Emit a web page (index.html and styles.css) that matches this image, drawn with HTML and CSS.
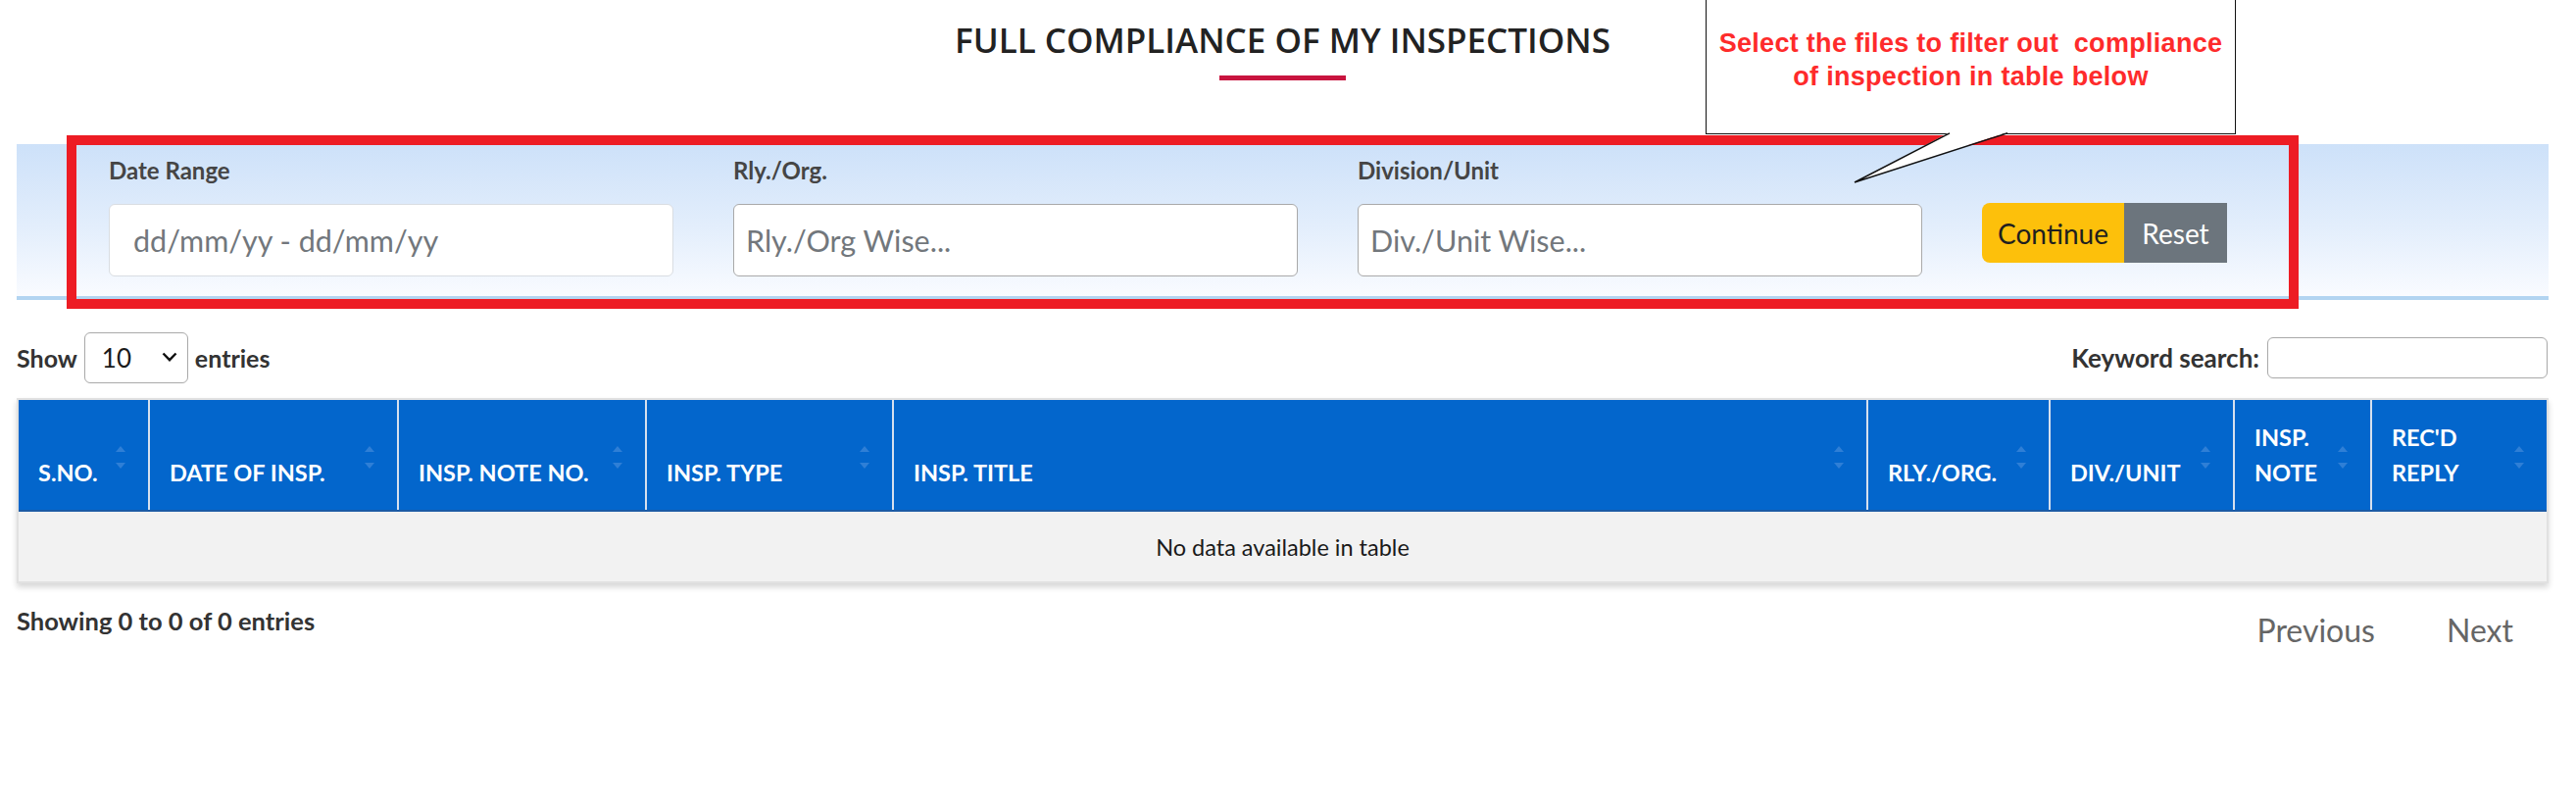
FILE: index.html
```html
<!DOCTYPE html>
<html lang="en">
<head>
<meta charset="utf-8">
<title>Full Compliance of My Inspections</title>
<link rel="stylesheet" href="styles.css">
</head>
<body>
<div class="page">
  <header class="page-head">
    <h1 class="title">FULL COMPLIANCE OF MY INSPECTIONS</h1>
    <div class="title-rule"></div>
  </header>

  <section class="filters">
    <div class="field">
      <label class="field-label">Date Range</label>
      <input class="input input-date" type="text" placeholder="dd/mm/yy - dd/mm/yy">
    </div>
    <div class="field">
      <label class="field-label">Rly./Org.</label>
      <input class="input input-dark" type="text" placeholder="Rly./Org Wise...">
    </div>
    <div class="field">
      <label class="field-label">Division/Unit</label>
      <input class="input input-dark" type="text" placeholder="Div./Unit Wise...">
    </div>
    <div class="actions">
      <button class="btn btn-continue" type="button">Continue</button><button class="btn btn-reset" type="button">Reset</button>
    </div>
  </section>

  <div class="dt-top">
    <div class="dt-length">
      <span>Show</span>
      <span class="select-wrap">
        <select class="dt-select"><option>10</option><option>25</option><option>50</option><option>100</option></select>
        <svg class="chev" viewBox="0 0 16 10" width="16" height="10"><path d="M1.5 1.5 L8 8.2 L14.5 1.5" fill="none" stroke="#111" stroke-width="2.4"/></svg>
      </span>
      <span>entries</span>
    </div>
    <div class="dt-search">
      <span>Keyword search:</span>
      <input class="search-input" type="search">
    </div>
  </div>

  <div class="table-wrap">
    <table class="dt">
      <colgroup>
        <col class="w1"><col class="w2"><col class="w3"><col class="w4"><col class="w5"><col class="w6"><col class="w7"><col class="w8"><col class="w9">
      </colgroup>
      <thead>
        <tr>
          <th>S.NO.</th>
          <th>DATE OF INSP.</th>
          <th>INSP. NOTE NO.</th>
          <th>INSP. TYPE</th>
          <th>INSP. TITLE</th>
          <th>RLY./ORG.</th>
          <th>DIV./UNIT</th>
          <th>INSP.<br>NOTE</th>
          <th>REC'D<br>REPLY</th>
        </tr>
      </thead>
      <tbody>
        <tr><td class="empty" colspan="9">No data available in table</td></tr>
      </tbody>
    </table>
  </div>

  <div class="dt-bottom">
    <div class="dt-info">Showing 0 to 0 of 0 entries</div>
    <div class="dt-paginate">
      <span class="pg-btn">Previous</span>
      <span class="pg-btn">Next</span>
    </div>
  </div>
</div>

<div class="annot-frame"></div>
<div class="callout">
  <p class="callout-text">Select the files to filter out&nbsp; compliance<br>of inspection in table below</p>
</div>
<svg class="callout-tail" viewBox="0 0 170 56" width="170" height="56">
  <polygon points="99,0 2,51 158,0" fill="#ffffff"/>
  <polyline points="99,0.8 2,51 158,0.8" fill="none" stroke="#111" stroke-width="1.5"/>
</svg>
</body>
</html>
```

FILE: styles.css
```css
* { box-sizing: border-box; }

html, body {
  margin: 0;
  padding: 0;
  background: #ffffff;
}

body {
  font-family: Lato, "Open Sans", "Liberation Sans", sans-serif;
  color: #212529;
  width: 2628px;
  height: 814px;
  overflow: hidden;
  position: relative;
}

.page {
  padding: 0 28px 0 17px;
}

/* ---------- heading ---------- */
.page-head {
  display: flex;
  flex-direction: column;
  align-items: center;
  padding-top: 17px;
}

.title {
  margin: 0;
  font-family: "Open Sans", "Liberation Sans", sans-serif;
  font-weight: 600;
  font-size: 35px;
  line-height: 47px;
  color: #222222;
  letter-spacing: 0;
}

.title-rule {
  width: 129px;
  height: 5px;
  margin-top: 13px;
  background: #c8143f;
}

/* ---------- filter band ---------- */
.filters {
  margin-top: 65px;
  display: flex;
  align-items: flex-start;
  gap: 61px;
  padding: 13px 0 20px 94px;
  background: linear-gradient(180deg, #cde1f9 0%, #e3eefc 55%, #f9fbff 100%);
  border-bottom: 4px solid #b2d4f1;
}

.field {
  width: 576px;
  display: flex;
  flex-direction: column;
  gap: 20px;
}

.field-label {
  font-size: 24px;
  line-height: 28px;
  font-weight: 700;
  color: #454545;
}

.input {
  width: 100%;
  height: 74px;
  border-radius: 6px;
  background: #ffffff;
  font-family: Lato, "Liberation Sans", sans-serif;
  font-size: 30.5px;
  color: #333;
  outline: none;
}

.input::placeholder { color: #72777c; }

.input-date {
  border: 1.5px solid #d9dde2;
  padding: 0 24px;
}

.input-dark {
  border: 1.5px solid #a9a9a9;
  padding: 0 12px;
}

.actions {
  margin-top: 47px;
  display: flex;
}

.btn {
  height: 61px;
  border: 0;
  font-family: Lato, "Liberation Sans", sans-serif;
  font-size: 28px;
  padding: 0 16px;
  cursor: pointer;
}

.btn-continue {
  width: 145px;
  background: #fdc00b;
  color: #1f1f1f;
  border-radius: 8px 0 0 8px;
}

.btn-reset {
  width: 105px;
  background: #6c757d;
  color: #ffffff;
  border-radius: 0;
}

/* ---------- datatable controls ---------- */
.dt-top {
  margin-top: 33px;
  height: 52px;
  display: flex;
  align-items: center;
  justify-content: space-between;
  font-size: 25px;
  font-weight: 700;
  color: #333333;
}

.dt-length {
  display: flex;
  align-items: center;
  gap: 7px;
}

.select-wrap {
  position: relative;
  display: inline-block;
  width: 106px;
  height: 52px;
}

.dt-select {
  appearance: none;
  -webkit-appearance: none;
  width: 100%;
  height: 100%;
  border: 1.5px solid #a9a9a9;
  border-radius: 6px;
  background: #ffffff;
  padding: 0 0 0 17px;
  font-family: Lato, "Liberation Sans", sans-serif;
  font-size: 26px;
  color: #1a1a1a;
}

.chev {
  position: absolute;
  right: 11px;
  top: 20px;
  pointer-events: none;
}

.dt-search {
  display: flex;
  align-items: center;
  gap: 8px;
  margin-right: 1px;
  font-size: 26px;
}

.search-input {
  width: 286px;
  height: 42px;
  border: 1.5px solid #a9a9a9;
  border-radius: 6px;
  background: #fff;
  outline: none;
}

/* ---------- table ---------- */
.table-wrap {
  margin-top: 15px;
  border: 2px solid #e1e1e1;
  box-shadow: 0 4px 6px rgba(0, 0, 0, 0.16);
}

.dt {
  width: 100%;
  border-collapse: collapse;
  table-layout: fixed;
}

.w1 { width: 133px; }
.w2 { width: 254px; }
.w3 { width: 253px; }
.w4 { width: 252px; }
.w5 { width: 994px; }
.w6 { width: 186px; }
.w7 { width: 188px; }
.w8 { width: 140px; }
.w9 { width: 179px; }

.dt th {
  position: relative;
  background: #0366cc;
  color: #ffffff;
  font-size: 23.5px;
  line-height: 36px;
  font-weight: 700;
  text-align: left;
  vertical-align: bottom;
  padding: 20px 20px 20px 20px;
  border-left: 2px solid #d6e0ee;
  border-bottom: 2px solid #1c5ba5;
  white-space: nowrap;
}

.dt th:first-child { border-left: 0; }

.dt th::before,
.dt th::after {
  content: "";
  position: absolute;
  right: 23px;
  width: 0;
  height: 0;
  border-left: 5px solid transparent;
  border-right: 5px solid transparent;
}

.dt th::before {
  top: 47px;
  border-bottom: 6px solid #2f7fd6;
}

.dt th::after {
  top: 64px;
  border-top: 6px solid #2f7fd6;
}

.dt td.empty {
  background: #f2f2f2;
  text-align: center;
  font-size: 23.5px;
  line-height: 34px;
  padding: 18.5px 10px;
  color: #1a1a1a;
}

/* ---------- bottom ---------- */
.dt-bottom {
  display: flex;
  justify-content: space-between;
  align-items: flex-start;
}

.dt-info {
  margin-top: 23px;
  font-size: 25.5px;
  line-height: 30px;
  font-weight: 700;
  color: #333333;
}

.dt-paginate {
  margin-top: 29px;
  display: flex;
  gap: 73px;
  padding-right: 36px;
}

.pg-btn {
  font-size: 32px;
  line-height: 38px;
  color: #666666;
}

/* ---------- annotation overlay ---------- */
.annot-frame {
  position: absolute;
  left: 68px;
  top: 138px;
  width: 2277px;
  height: 177px;
  border: 10px solid #ed1c24;
  pointer-events: none;
}

.callout {
  position: absolute;
  left: 1740px;
  top: -2px;
  width: 541px;
  height: 139px;
  background: #ffffff;
  border: 1.5px solid #111111;
  padding-top: 28px;
}

.callout-text {
  margin: 0;
  text-align: center;
  font-family: "Liberation Sans", Arial, sans-serif;
  font-weight: 700;
  font-size: 27px;
  line-height: 34px;
  letter-spacing: 0.3px;
  color: #fe2b2b;
}

.callout-tail {
  position: absolute;
  left: 1890px;
  top: 135px;
  overflow: visible;
}
```
